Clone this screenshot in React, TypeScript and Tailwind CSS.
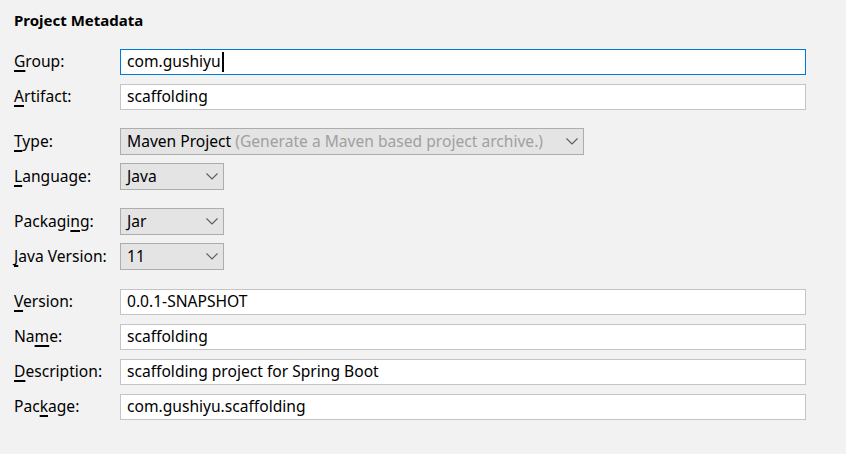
import React from "react";

const font = { fontFamily: '"Noto Sans", "Open Sans", sans-serif' };

function Label({ text, m }: { text: string; m: number }) {
  return (
    <div className="w-[106px] shrink-0 text-[15.6px] text-black leading-none whitespace-nowrap">
      {text.slice(0, m)}
      <span className="underline decoration-[1.5px] underline-offset-[3px]">{text[m]}</span>
      {text.slice(m + 1)}
    </div>
  );
}

function TextRow({ label, m, value, focused, cursor, mt }: { label: string; m: number; value: string; focused?: boolean; cursor?: boolean; mt: string }) {
  return (
    <div className={`flex items-center h-[26px] ${mt}`}>
      <Label text={label} m={m} />
      <div
        className={`flex-1 h-full bg-white border flex items-center pl-[6px] text-[15.6px] text-black ${
          focused ? "border-[#0078d7]" : "border-[#c4c4c4]"
        }`}
      >
        <span>{value}</span>
        {cursor && <span className="inline-block w-[2px] h-[20px] bg-black ml-[1px]" />}
      </div>
    </div>
  );
}

function Chevron() {
  return (
    <svg width="12" height="7" viewBox="0 0 12 7" className="shrink-0">
      <path d="M0.5 0.5 L6 6 L11.5 0.5" fill="none" stroke="#5a5a5a" strokeWidth="1.1" />
    </svg>
  );
}

function SelectRow({ label, m, value, hint, wide, mt }: { label: string; m: number; value: string; hint?: string; wide?: boolean; mt: string }) {
  return (
    <div className={`flex items-center h-[27px] ${mt}`}>
      <Label text={label} m={m} />
      <div
        className={`h-full bg-[#e4e4e4] border border-[#adadad] flex items-center pl-[6px] pr-[5px] text-[15.6px] ${
          wide ? "w-[464px]" : "w-[104px]"
        }`}
      >
        <span className="flex-1 text-black whitespace-nowrap">
          {value}
          {hint && <span className="text-[#a0a0a0]"> {hint}</span>}
        </span>
        <Chevron />
      </div>
    </div>
  );
}

export default function App() {
  return (
    <div style={font} className="w-[846px] h-[454px] bg-[#f2f2f2] pt-[10px] pl-[14px] pr-[40px] overflow-hidden">
      <div className="h-[20px] leading-[20px] text-[15px] font-bold text-black">Project Metadata</div>
      <div className="flex flex-col mt-[19px]">
        <TextRow label="Group:" m={0} value="com.gushiyu" focused cursor mt="" />
        <TextRow label="Artifact:" m={0} value="scaffolding" mt="mt-[9px]" />
        <SelectRow label="Type:" m={0} value="Maven Project" hint="(Generate a Maven based project archive.)" wide mt="mt-[18px]" />
        <SelectRow label="Language:" m={0} value="Java" mt="mt-[8px]" />
        <SelectRow label="Packaging:" m={7} value="Jar" mt="mt-[18px]" />
        <SelectRow label="Java Version:" m={0} value="11" mt="mt-[8px]" />
        <TextRow label="Version:" m={0} value="0.0.1-SNAPSHOT" mt="mt-[19px]" />
        <TextRow label="Name:" m={2} value="scaffolding" mt="mt-[9px]" />
        <TextRow label="Description:" m={0} value="scaffolding project for Spring Boot" mt="mt-[9px]" />
        <TextRow label="Package:" m={3} value="com.gushiyu.scaffolding" mt="mt-[9px]" />
      </div>
    </div>
  );
}
